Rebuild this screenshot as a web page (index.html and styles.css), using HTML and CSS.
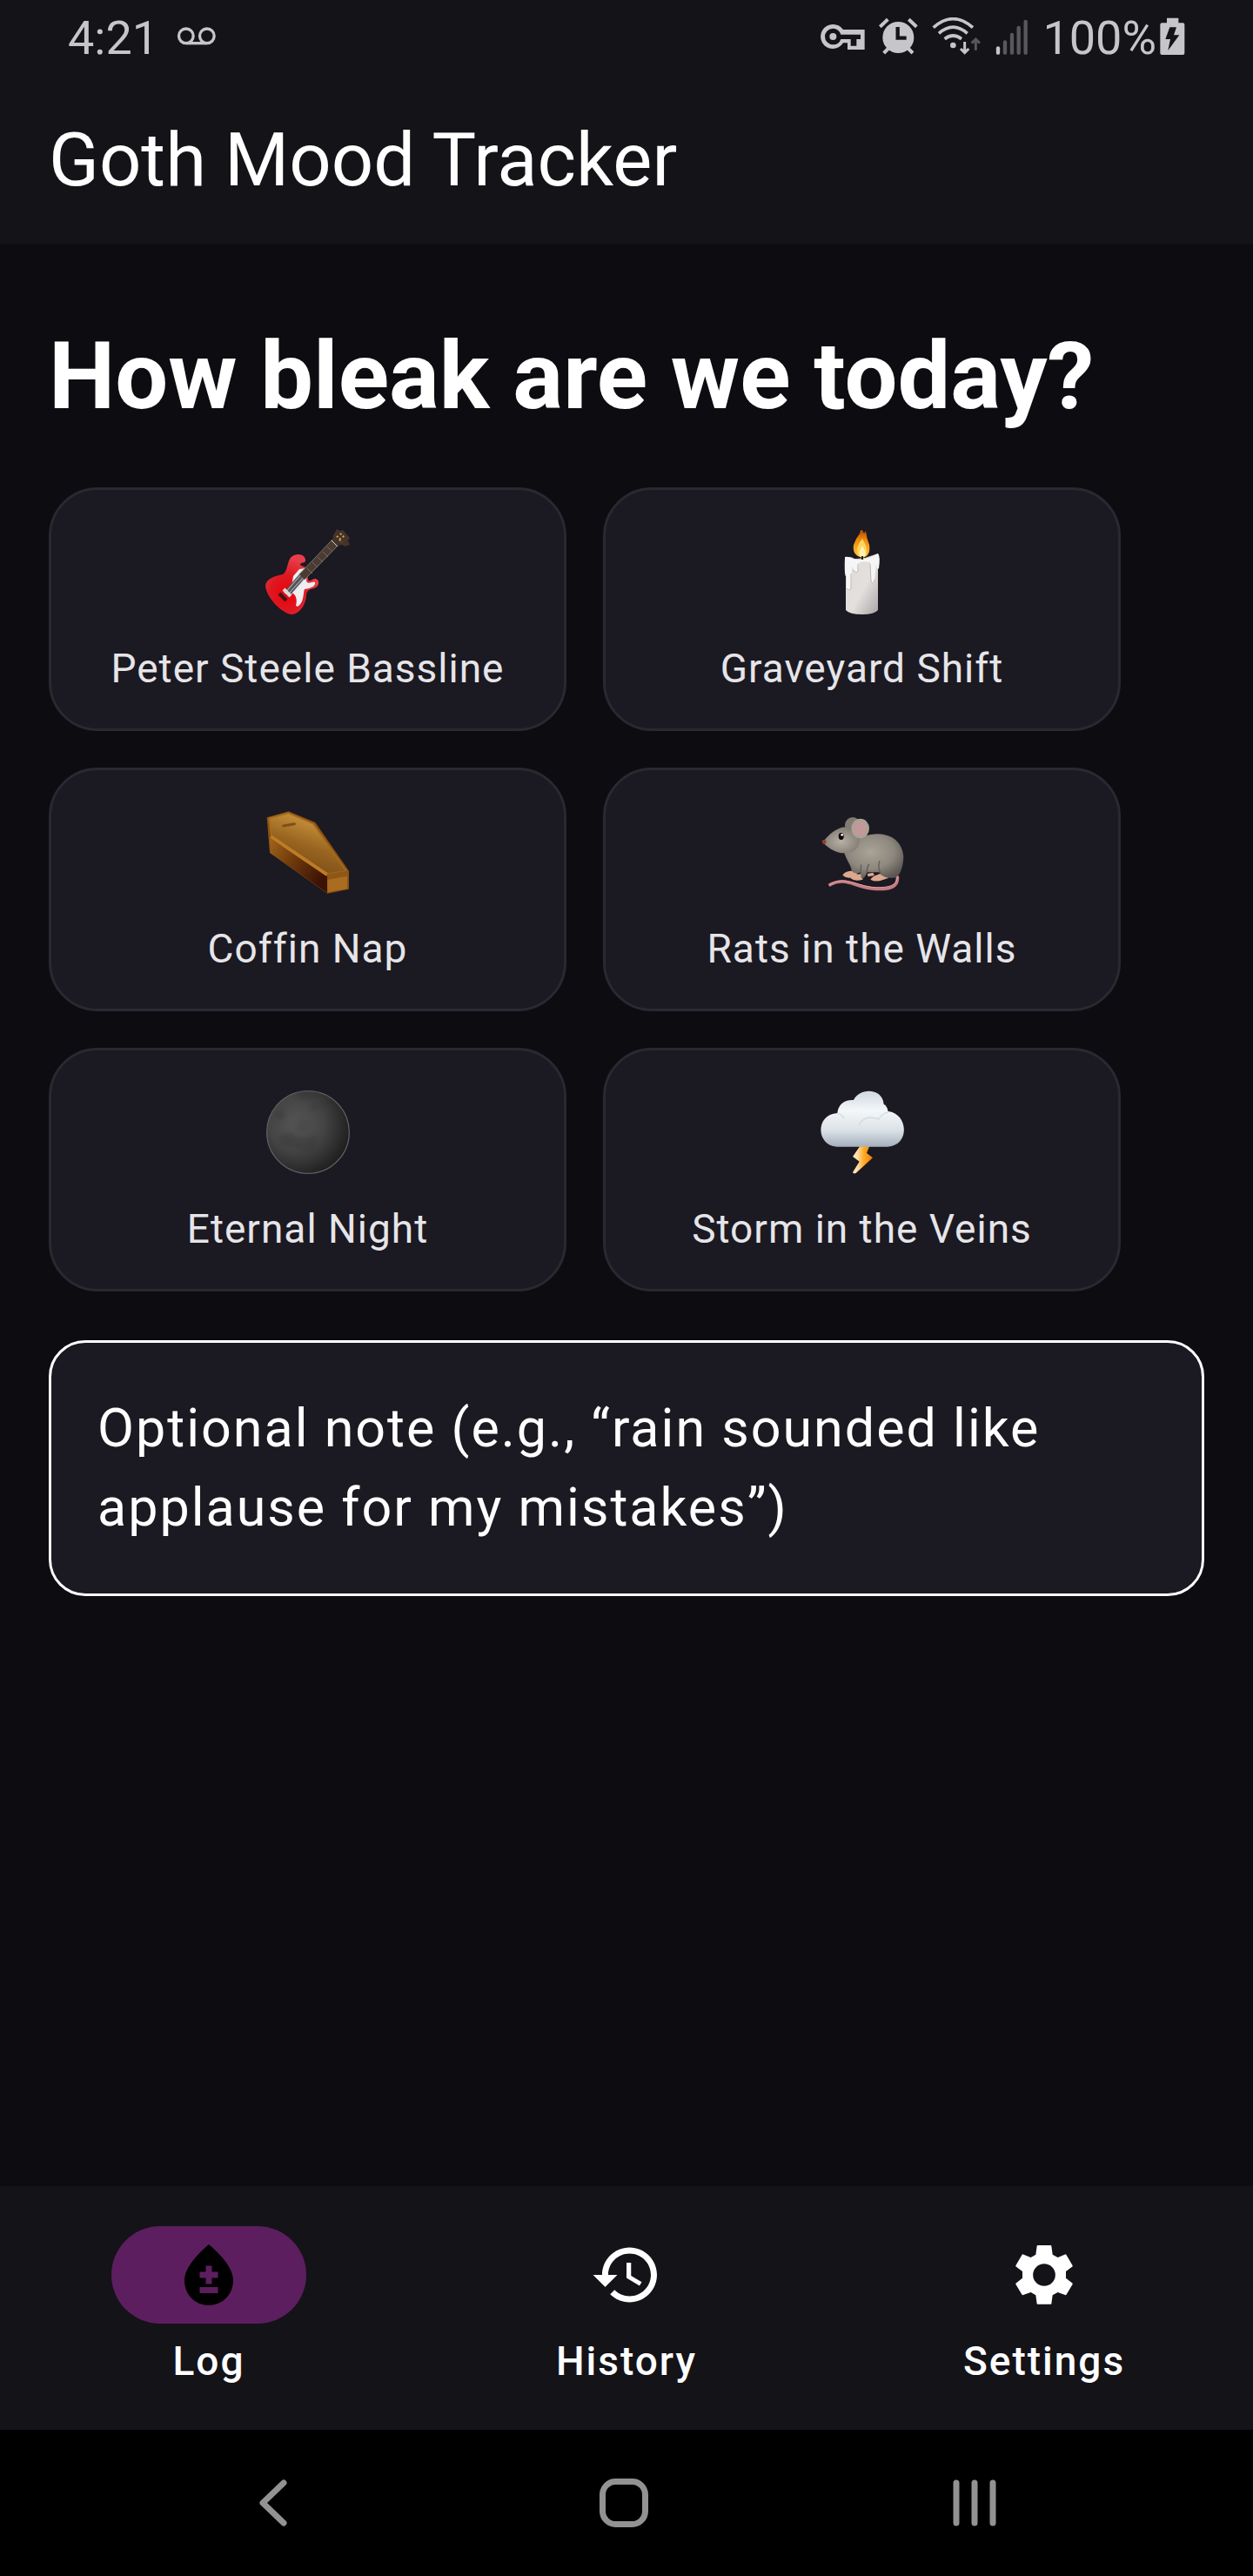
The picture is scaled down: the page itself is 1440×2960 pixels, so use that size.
FILE: index.html
```html
<!DOCTYPE html>
<html lang="en">
<head>
<meta charset="utf-8">
<meta name="viewport" content="width=device-width, initial-scale=1">
<title>Goth Mood Tracker</title>
<link rel="stylesheet" href="styles.css">
</head>
<body>
<header class="top">
  <div class="status">
    <span class="status-text">4:21</span>
    <svg class="status-icon voicemail" viewBox="608 60 140 144" width="47" height="48" fill="none" stroke="currentColor" stroke-width="10" aria-hidden="true"><circle cx="643" cy="124" r="25"/><circle cx="715" cy="124" r="25"/><path d="M643 149h72"/></svg>
    <div class="status-right">
      <svg class="status-icon" viewBox="64 60 153 144" width="51" height="48" aria-hidden="true"><path d="M107 84a42 42 0 0 1 35 18h74v69h-59v-23h-15a42 42 0 1 1-35-64zM107 98a28 28 0 1 0 0 56a28 28 0 0 0 27-19h34v23h20v-23h14v-16h-68a28 28 0 0 0-27-21z" fill="currentColor" fill-rule="evenodd"/><circle cx="107" cy="126" r="12" fill="currentColor"/></svg>
      <svg class="status-icon" viewBox="269 60 135 144" width="45" height="48" aria-hidden="true"><circle cx="336" cy="129" r="54" fill="currentColor"/><path d="M273 92l27-25M399 92l-27-25" stroke="currentColor" stroke-width="12"/><path d="M286 183l18-18M386 183l-18-18" stroke="currentColor" stroke-width="12"/><path d="M334 93v38h30" fill="none" stroke="#141318" stroke-width="13"/></svg>
      <svg class="status-icon" viewBox="450 60 171 144" width="57" height="48" fill="none" stroke="currentColor" stroke-width="11" aria-hidden="true"><path d="M455 95Q523 35 591 95M474 115Q523 72 572 115M494 134Q523 112 552 134"/><circle cx="523" cy="156" r="10" fill="currentColor" stroke="none"/><path d="M563 144v38M549 168l14 14 14-14" stroke-width="9"/><path d="M601 173v-38M587 149l14-14 14 14" stroke="#58575c" stroke-width="9"/></svg>
      <svg class="status-icon" viewBox="663 60 114 144" width="38" height="48" stroke="#58575c" stroke-width="13" stroke-linecap="round" aria-hidden="true"><path d="M672 166v16" stroke="#c6c5c9"/><path d="M696 145v37M720 120v62M743 96v86M767 75v107"/></svg>
      <div class="battery">
        <span class="status-text">100%</span>
        <svg class="status-icon" viewBox="1238 60 87 144" width="29" height="48" aria-hidden="true"><path d="M1262 62h40v17h15q6 0 6 6v98q0 6-6 6h-72q-6 0-6-6V85q0-6 6-6h17zM1272 94l-15 41h17l-8 39 39-53h-19l9-27z" fill="currentColor" fill-rule="evenodd"/></svg>
      </div>
    </div>
  </div>
  <div class="title">Goth Mood Tracker</div>
</header>

<main class="main">
  <h1 class="question">How bleak are we today?</h1>
  <div class="moods">
    <button class="mood" type="button">
      <svg class="emoji" viewBox="0 0 98 98" aria-hidden="true">
        <defs><radialGradient id="red" cx="40%" cy="65%" r="60%"><stop offset="0" stop-color="#f00006"/><stop offset=".5" stop-color="#dc1822"/><stop offset="1" stop-color="#e83e49"/></radialGradient></defs>
        <path d="M0 65C1 56 12 54 20 52C27 48 24 33 33 30C40 27 47 31 46 37C44 40 41 37 40 41C43 44 47 42 48 46L49 58C52 62 53 56 58 57C63 59 62 66 56 68C50 69 47 71 47 77C46 88 39 97 31 98C20 98 1 79 0 65Z" fill="url(#red)"/>
        <path d="M39 46L45 45 48 50 47 60C50 64 53 60 57 61C58 65 53 68 45 69C43 74 45 84 37 89L35 88C37 80 35 75 29 72L32 54Z" fill="#eeedf0"/>
        <path d="M24 75L44 52" stroke="#55555a" stroke-width="8"/><path d="M22 74L42 51M25 76L45 54M28 77L47 55" stroke="#c9c8cc" stroke-width="1"/>
        <path d="M16 74l8 8" stroke="#3b1519" stroke-width="4"/><path d="M21 69l8 8" stroke="#d8d8dc" stroke-width="4"/>
        <path d="M42 55L81 15" stroke="#4a3c33" stroke-width="9"/><path d="M39 52L77 12M45 58L84 18" stroke="#7d7067" stroke-width="1"/><path d="M48 45l6 6M54 38l6 6M60 32l6 6M66 26l6 6M71 20l6 6" stroke="#75685f" stroke-width="1"/>
        <path d="M78 7l4-7 4 2 3-1 8 9-2 3 2 5-6 2-3-2-5 1-6-5z" fill="#43332a"/><path d="M82 8l5 4M86 5l5 5M85 12l3 3" stroke="#d3a650" stroke-width="2" stroke-dasharray="2 2"/><path d="M76 13l7 7" stroke="#ddd5ca" stroke-width="1"/>
      </svg>
      <span>Peter Steele Bassline</span>
    </button>
    <button class="mood" type="button">
      <svg class="emoji" viewBox="0 0 98 98" aria-hidden="true">
        <defs><linearGradient id="wax" x2="1" y2="1"><stop offset="0" stop-color="#dedad8"/><stop offset=".55" stop-color="#e4e0de"/><stop offset="1" stop-color="#a9a5a6"/></linearGradient><linearGradient id="flame" x2="0" y2="1"><stop offset="0" stop-color="#a94806"/><stop offset=".35" stop-color="#ee8b0b"/><stop offset="1" stop-color="#ffc83b"/></linearGradient></defs>
        <path d="M30 35V93Q34 98 49 98Q63 98 67 93V32z" fill="url(#wax)"/>
        <path d="M29 34Q34 30 40 34L49 34 67 28 66 36H31z" fill="#d8d0bb"/>
        <path d="M29 32Q33 31 38 34Q49 38 67 28Q70 31 68 45Q66 48 65 39L63 58Q62 64 59 60L58 38Q48 36 45 39L44 48Q42 53 39 46L37 43L36 68Q34 73 31 68L31 54Q28 57 29 32Z" fill="#f7f6f7"/>
        <path d="M58 40L59 60Q62 64 63 58M44 40V48Q42 52 39 47M36 51V68Q34 72 31 68" fill="none" stroke="#bbb6b5" stroke-width="1"/>
        <path d="M49 1L51 5 53 2Q54 11 57 18Q59 31 49 33Q37 30 39 18Q42 10 46 5L47 1Z" fill="url(#flame)"/><path d="M49 11Q57 24 52 30Q48 34 44 29Q40 22 49 11Z" fill="#ffd45c"/><path d="M49 19Q57 32 49 32Q42 31 49 19Z" fill="#fff0b4"/><path d="M49 31v4" stroke="#252020" stroke-width="2"/>
      </svg>
      <span>Graveyard Shift</span>
    </button>
    <button class="mood" type="button">
      <svg class="emoji" viewBox="75 90 294 294" aria-hidden="true">
        <defs><linearGradient id="lid" x1=".2" y1="1" x2=".65" y2="0"><stop offset="0" stop-color="#6f4415"/><stop offset=".5" stop-color="#9a6520"/><stop offset="1" stop-color="#d4a045"/></linearGradient><linearGradient id="side" x2="1" y2=".6"><stop offset="0" stop-color="#a1651d"/><stop offset=".45" stop-color="#713b0c"/><stop offset="1" stop-color="#3c1204"/></linearGradient></defs>
        <path d="M80 118L155 97 247 135 363 302V365L289 380 90 240Z" fill="#8b5212"/>
        <path d="M90 190L288 320V378L92 240Z" fill="url(#side)"/>
        <path d="M88 121L154 103 240 140 354 303 290 312 96 181Z" fill="url(#lid)" stroke="#a76c1f" stroke-width="5"/>
        <path d="M94 184L288 316" stroke="#bd7d25" stroke-width="11"/><path d="M288 321L361 310" stroke="#8f5715" stroke-width="17"/><path d="M289 332L357 320V364L289 376Z" fill="#a96c20"/><path d="M137 147l38-7" stroke="#80501a" stroke-width="9" stroke-linecap="round"/>
      </svg>
      <span>Coffin Nap</span>
    </button>
    <button class="mood" type="button">
      <svg class="emoji" viewBox="94 90 294 294" aria-hidden="true">
        <defs><radialGradient id="fur" cx=".45" cy=".4" r=".65"><stop offset="0" stop-color="#aaa397"/><stop offset=".6" stop-color="#8d877d"/><stop offset="1" stop-color="#5b5752"/></radialGradient><radialGradient id="face" cx=".5" cy=".55" r=".6"><stop offset="0" stop-color="#b7b0a5"/><stop offset="1" stop-color="#7c766e"/></radialGradient></defs>
        <path d="M362 320C366 360 333 367 287 364C219 361 181 318 126 352" fill="none" stroke="#c47b82" stroke-width="11"/><path d="M362 320C362 353 333 360 287 359C219 356 181 314 126 352" fill="none" stroke="#e3a3a6" stroke-width="3"/>
        <path d="M208 302Q180 302 173 317Q190 332 211 323L225 312M238 312Q208 315 201 328Q214 340 243 332M302 312Q275 320 269 332Q288 343 312 333L333 326M258 312l20-4 5 10-22 4z" fill="#dba88f"/>
        <ellipse cx="208" cy="145" rx="27" ry="28" fill="#827b72"/>
        <path d="M177 235C187 270 204 284 204 302Q218 316 234 307L238 327Q249 332 257 307H299Q309 328 347 326C371 326 382 290 383 252C379 205 345 174 292 175Q254 176 230 190Z" fill="url(#fur)"/>
        <path d="M301 268Q292 293 306 313M265 279Q257 288 257 307M237 281L235 307" fill="none" stroke="#625d55" stroke-width="4"/>
        <path d="M105 203C126 176 153 153 181 151C213 153 237 175 231 204C226 231 205 241 180 241C151 241 124 225 105 203Z" fill="url(#face)"/>
        <ellipse cx="234" cy="156" rx="31" ry="34" fill="#aaa397"/><ellipse cx="234" cy="157" rx="22" ry="25" fill="#c49898"/>
        <ellipse cx="168" cy="183" rx="9" ry="12" fill="#090909"/><circle cx="171" cy="178" r="4" fill="#fff"/><path d="M102 199Q109 190 117 199Q117 208 108 211Q101 206 102 199Z" fill="#92402d"/>
      </svg>
      <span>Rats in the Walls</span>
    </button>
    <button class="mood" type="button">
      <svg class="emoji" viewBox="75 66 294 294" aria-hidden="true">
        <defs><radialGradient id="moon" cx=".36" cy=".4" r=".65"><stop offset="0" stop-color="#555"/><stop offset=".5" stop-color="#454545"/><stop offset="1" stop-color="#202020"/></radialGradient><filter id="soft"><feGaussianBlur stdDeviation="8"/></filter></defs>
        <circle cx="222" cy="213" r="142" fill="url(#moon)" stroke="#5d5d60" stroke-width="4"/>
        <g filter="url(#soft)" fill="#363636" opacity=".4"><circle cx="124" cy="153" r="18"/><ellipse cx="215" cy="87" rx="32" ry="14"/><ellipse cx="246" cy="122" rx="17" ry="14"/><path d="M123 232Q157 203 183 229Q215 237 246 225Q275 244 233 287Q189 278 165 263Q133 272 123 232Z"/><ellipse cx="201" cy="190" rx="24" ry="22" opacity=".6"/></g>
      </svg>
      <span>Eternal Night</span>
    </button>
    <button class="mood" type="button">
      <svg class="emoji" viewBox="94 66 294 294" aria-hidden="true">
        <defs><linearGradient id="cloud" x2="0" y2="1"><stop offset="0" stop-color="#d0d8df"/><stop offset=".35" stop-color="#f4f7f9"/><stop offset=".7" stop-color="#dce2e7"/><stop offset="1" stop-color="#a5b0bd"/></linearGradient><linearGradient id="bolt" x2="1"><stop offset=".2" stop-color="#ffe2b7"/><stop offset=".55" stop-color="#ffac25"/><stop offset="1" stop-color="#f27a05"/></linearGradient></defs>
        <path d="M235 258L208 297 231 314 208 351Q210 358 219 354L277 301 256 285 267 258Z" fill="url(#bolt)"/>
        <path d="M153 263C81 260 78 151 155 147C158 115 183 99 211 102C229 60 310 57 315 116Q327 123 330 141C399 148 407 258 329 263Z" fill="url(#cloud)"/>
        <path d="M229 190Q245 151 298 168Q307 150 330 144M155 148Q171 150 178 166" fill="none" stroke="#d3dae0" stroke-width="4"/>
      </svg>
      <span>Storm in the Veins</span>
    </button>
  </div>
  <textarea class="note" rows="2" aria-label="Optional note" placeholder="Optional note (e.g., “rain sounded like applause for my mistakes”)"></textarea>
</main>

<nav class="tabs" aria-label="Sections">
  <a class="tab" href="#log" aria-current="page"><span class="pill active"><svg class="tab-icon" viewBox="0 0 24 24" fill="#000" aria-hidden="true"><path d="M12 2c-5.33 4.55-8 8.48-8 11.8 0 4.98 3.8 8.2 8 8.2s8-3.22 8-8.2C20 10.48 17.33 6.55 12 2zm3 16H9v-2h6v2zm0-5h-2v2h-2v-2H9v-2h2V9h2v2h2v2z"/></svg></span>Log</a>
  <a class="tab" href="#history"><span class="pill"><svg class="tab-icon" viewBox="0 0 24 24" fill="#fff" aria-hidden="true"><path d="M13 3c-4.97 0-9 4.03-9 9H1l3.89 3.89.07.14L9 12H6c0-3.87 3.13-7 7-7s7 3.13 7 7-3.13 7-7 7c-1.93 0-3.68-.79-4.94-2.06l-1.42 1.42C8.27 19.99 10.51 21 13 21c4.97 0 9-4.03 9-9s-4.03-9-9-9zm-1 5v5l4.28 2.54.72-1.21-3.5-2.08V8H12z"/></svg></span>History</a>
  <a class="tab" href="#settings"><span class="pill"><svg class="tab-icon" viewBox="324 216 252 252" fill="#fff" aria-hidden="true"><path fill-rule="evenodd" d="M427 240H473L475 242 479 272 497 282 524 271 526 272 548 310V313L525 330V353L548 371V374L526 411 524 412 497 402 479 412 475 442 473 443H427L425 442 421 412 404 402 376 412 374 411 352 374V371L375 353V330L352 313V310L374 272 376 271 404 282 421 272 425 242ZM450 303.500A38.500 38.500 0 1 0 450 380.500A38.500 38.500 0 1 0 450 303.500Z"/></svg></span>Settings</a>
</nav>

<div class="system">
  <button class="key" type="button" aria-label="Back"><svg viewBox="0 0 58 58" width="58" height="58" fill="none" stroke="#929292" stroke-width="7" stroke-linecap="round" stroke-linejoin="round" aria-hidden="true"><path d="M41 6L17 29l24 23"/></svg></button>
  <button class="key" type="button" aria-label="Home"><svg viewBox="0 0 58 58" width="58" height="58" fill="none" stroke="#929292" stroke-width="7" aria-hidden="true"><rect x="4.500" y="4.500" width="49" height="49" rx="15"/></svg></button>
  <button class="key" type="button" aria-label="Recent apps"><svg viewBox="0 0 58 58" width="58" height="58" fill="none" stroke="#929292" stroke-width="7" stroke-linecap="round" aria-hidden="true"><path d="M8 6v46M29 6v46M50 6v46"/></svg></button>
</div>
</body>
</html>
```
FILE: styles.css
```css
* {
  box-sizing: border-box;
}

body {
  margin: 0;
  min-height: 100vh;
  display: flex;
  flex-direction: column;
  background: #0d0c11;
  color: #fff;
  font-family: Roboto, "Liberation Sans", sans-serif;
}

button {
  font-family: inherit;
  cursor: pointer;
}

.top {
  background: #141318;
}

.status {
  display: flex;
  align-items: center;
  height: 88px;
  padding: 0 78px;
  color: #c6c5c9;
}

.status-text {
  font-size: 54px;
  line-height: 64px;
}

.status-icon {
  display: block;
  flex: none;
}

.voicemail {
  margin-left: 20px;
}

.status-right {
  display: flex;
  align-items: center;
  gap: 16px;
  margin-left: auto;
}

.battery {
  display: flex;
  align-items: center;
  gap: 4px;
}

.title {
  padding: 0 56px;
  font-size: 85px;
  line-height: 192px;
}

.main {
  flex: 1;
  padding: 82px 56px 56px;
}

.question {
  margin: 0 0 58px;
  font-size: 108px;
  line-height: 140px;
  font-weight: 700;
}

.moods {
  display: flex;
  flex-wrap: wrap;
  gap: 42px;
}

.mood {
  display: flex;
  flex-direction: column;
  align-items: center;
  gap: 32px;
  width: 595px;
  padding: 45px 0 39px;
  border: 3px solid #2a2830;
  border-radius: 56px;
  background: #1b1922;
  color: #e6e5e8;
  font-size: 46px;
  line-height: 60px;
  letter-spacing: 1px;
}

.emoji {
  display: block;
  width: 98px;
  height: 98px;
}

.note {
  display: block;
  width: 100%;
  margin-top: 56px;
  padding: 53px;
  border: 3px solid #fff;
  border-radius: 42px;
  background: #1b1922;
  color: #fff;
  font-family: inherit;
  font-size: 61px;
  line-height: 91px;
  letter-spacing: 2px;
  resize: none;
  overflow: hidden;
}

.note::placeholder {
  color: #fff;
  opacity: 1;
}

.tabs {
  display: grid;
  grid-template-columns: repeat(3, 1fr);
  padding: 46px 0 48px;
  background: #141318;
}

.tab {
  display: flex;
  flex-direction: column;
  align-items: center;
  gap: 12px;
  color: #fff;
  font-size: 46px;
  line-height: 62px;
  font-weight: 500;
  letter-spacing: 2px;
  text-decoration: none;
}

.pill {
  display: flex;
  align-items: center;
  justify-content: center;
  width: 224px;
  height: 112px;
  border-radius: 56px;
}

.active {
  background: #5c1e5f;
}

.tab-icon {
  display: block;
  width: 84px;
  height: 84px;
}

.system {
  display: grid;
  grid-template-columns: repeat(3, 1fr);
  padding: 0 118px 0 112px;
  background: #000;
}

.key {
  display: flex;
  align-items: center;
  justify-content: center;
  height: 168px;
  padding: 0;
  border: 0;
  background: none;
}
```
